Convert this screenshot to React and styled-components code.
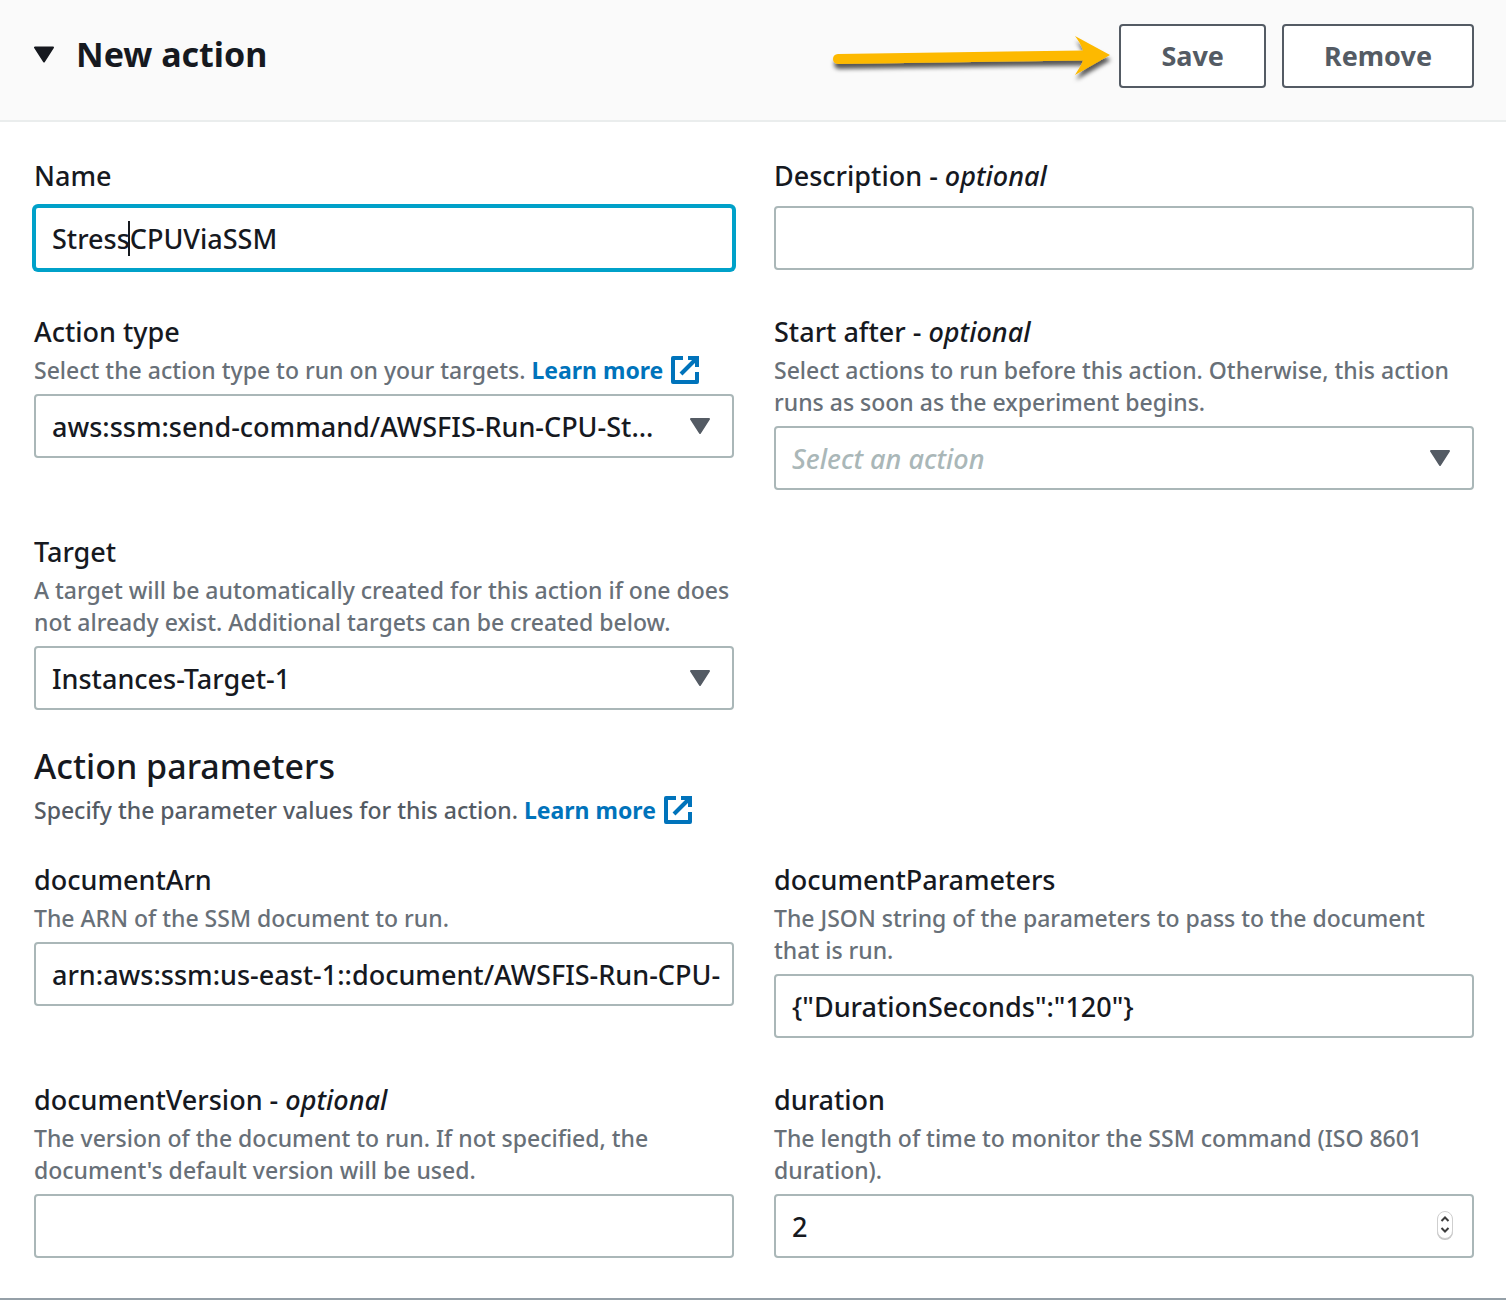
import React from "react";
import styled, { createGlobalStyle, css } from "styled-components";

const colors = {
  text: "#16191f",
  muted: "#687078",
  secondary: "#545b64",
  border: "#aab7b8",
  placeholder: "#aab7b8",
  link: "#0073bb",
  focus: "#00a1c9",
  header: "#fafafa",
  divider: "#eaeded",
};

const GlobalStyle = createGlobalStyle`
  *, *::before, *::after { box-sizing: border-box; }
  body {
    margin: 0;
    background: #ffffff;
    color: ${colors.text};
    font-family: "Noto Sans", "Open Sans", sans-serif;
    font-size: 27px;
    font-weight: 500;
  }
`;

const Panel = styled.section`
  width: 100%;
  border-bottom: 2px solid #95a0a8;
  box-shadow: 0 2px 0 #d9dfdf;
`;

const Header = styled.header`
  display: flex;
  align-items: flex-start;
  justify-content: space-between;
  padding: 24px 32px 32px 34px;
  background: ${colors.header};
  border-bottom: 2px solid ${colors.divider};
`;

const Toggle = styled.button`
  display: flex;
  align-items: center;
  gap: 22px;
  height: 60px;
  padding: 0;
  border: 0;
  background: none;
  color: ${colors.text};
  font: inherit;
  cursor: pointer;
`;

const Title = styled.span`
  font-size: 34px;
  font-weight: 700;
  line-height: 44px;
`;

const Actions = styled.div`
  display: flex;
  align-items: center;
  gap: 16px;
`;

const Pointer = styled.svg`
  display: block;
  flex: none;
  margin-right: -12px;
  overflow: visible;
`;

const Button = styled.button`
  height: 64px;
  padding: 0 40px;
  border: 2px solid ${colors.secondary};
  border-radius: 4px;
  background: #ffffff;
  color: ${colors.secondary};
  font: inherit;
  font-weight: 700;
  line-height: 40px;
  cursor: pointer;
`;

const Body = styled.form`
  padding: 32px 32px 40px 34px;
`;

const Grid = styled.div`
  display: grid;
  grid-template-columns: repeat(2, minmax(0, 1fr));
  column-gap: 40px;
  row-gap: 40px;
  align-items: start;
`;

const Field = styled.div`
  display: flex;
  flex-direction: column;
`;

const Label = styled.label`
  line-height: 44px;
`;

const Hint = styled.p`
  margin: 0;
  color: ${(p) => (p.$strong ? colors.secondary : colors.muted)};
  font-size: 23px;
  line-height: 32px;
`;

const Link = styled.a`
  color: ${colors.link};
  font-weight: 700;
  text-decoration: none;
  white-space: nowrap;

  svg {
    margin-left: 8px;
    vertical-align: -5px;
  }
`;

const Control = styled.div`
  position: relative;
  margin-top: 8px;
`;

const box = css`
  display: block;
  width: 100%;
  height: 64px;
  margin: 0;
  padding: 0 12px 0 16px;
  border: 2px solid ${colors.border};
  border-radius: 4px;
  outline: 0;
  background: #ffffff;
  color: ${colors.text};
  font: inherit;
`;

const Input = styled.input`
  ${box}
  appearance: textfield;

  &::-webkit-inner-spin-button {
    appearance: none;
    margin: 0;
  }

  ${(p) =>
    p.$active &&
    css`
      border-color: ${colors.focus};
      box-shadow: 0 0 0 2px ${colors.focus};
    `}
`;

const Select = styled.select`
  ${box}
  appearance: none;
  padding-right: 60px;
  text-overflow: ellipsis;

  ${(p) =>
    p.$empty &&
    css`
      color: ${colors.placeholder};
      font-style: italic;
    `}
`;

const ControlIcon = styled.svg`
  position: absolute;
  top: 50%;
  right: ${(p) => p.$right}px;
  transform: translateY(-50%);
  pointer-events: none;
`;

const Caret = styled.span`
  position: absolute;
  top: 15px;
  left: 94px;
  width: 2px;
  height: 35px;
  background: ${colors.text};
  pointer-events: none;
`;

const SectionHead = styled.div`
  display: flex;
  flex-direction: column;
  gap: 4px;
  margin: 32px 0;
`;

const SectionTitle = styled.h3`
  margin: 0;
  font-size: 34px;
  font-weight: 500;
  line-height: 48px;
`;

const TRIANGLE = "M1 1.500h18L10 15.500z";

function ExternalIcon() {
  return (
    <svg width="28" height="28" viewBox="0 0 28 28" fill="none" stroke="currentColor" strokeWidth="4" aria-hidden="true">
      <path d="M12 2H2v24h24V16" strokeLinejoin="round" />
      <path d="M17 2h9v9" />
      <path d="M26 2L10 18" />
    </svg>
  );
}

function LearnMore() {
  return (
    <Link href="#">
      Learn more
      <ExternalIcon />
    </Link>
  );
}

function FormField({ id, label, optional, hint, children }) {
  return (
    <Field>
      <Label htmlFor={id}>
        {label}
        {optional && (
          <>
            {" - "}
            <em>optional</em>
          </>
        )}
      </Label>
      {hint && <Hint>{hint}</Hint>}
      <Control>{children}</Control>
    </Field>
  );
}

function Dropdown({ id, value, empty }) {
  return (
    <>
      <Select id={id} $empty={empty}>
        <option>{value}</option>
      </Select>
      <ControlIcon $right={24} width="20" height="17" viewBox="0 0 20 17" aria-hidden="true">
        <path d={TRIANGLE} fill={colors.secondary} stroke={colors.secondary} strokeWidth="2" strokeLinejoin="round" />
      </ControlIcon>
    </>
  );
}

function Stepper() {
  return (
    <ControlIcon $right={20} width="18" height="30" viewBox="0 0 18 30" fill="none" aria-hidden="true">
      <rect x="1" y="2" width="16" height="27" rx="8" fill="#c4c4c4" />
      <rect x="1.5" y="0.5" width="15" height="27" rx="7.5" fill="#fff" stroke="#cfcfcf" />
      <path d="M5.5 10L9 6.500l3.500 3.500M5.500 17L9 20.500l3.500-3.500" stroke="#3c3c3c" strokeWidth="2" />
    </ControlIcon>
  );
}

function ArrowPointer() {
  return (
    <Pointer width="282" height="56" viewBox="0 0 282 56" aria-hidden="true">
      <defs>
        <filter id="arrow-shadow" x="-5%" y="-20%" width="110%" height="160%">
          <feDropShadow dx="1" dy="5" stdDeviation="2" floodColor="#000" floodOpacity="0.65" />
        </filter>
      </defs>
      <path
        d="M5 26L250 22.500C248.500 17 245 12 242 8L277 27L242 47C245 42 248.500 37 250 32.500L5 36Q0 35.500 0 31Q0 26.500 5 26Z"
        fill="#fdb900"
        filter="url(#arrow-shadow)"
      />
    </Pointer>
  );
}

export default function App() {
  return (
    <>
      <GlobalStyle />
      <Panel>
        <Header>
          <Toggle type="button" aria-expanded="true">
            <svg width="20" height="17" viewBox="0 0 20 17" aria-hidden="true">
              <path d={TRIANGLE} fill={colors.text} stroke={colors.text} strokeWidth="2" strokeLinejoin="round" />
            </svg>
            <Title>New action</Title>
          </Toggle>
          <Actions>
            <ArrowPointer />
            <Button type="button">Save</Button>
            <Button type="button">Remove</Button>
          </Actions>
        </Header>
        <Body>
          <Grid>
            <FormField id="name" label="Name">
              <Input id="name" $active defaultValue="StressCPUViaSSM" />
              <Caret />
            </FormField>
            <FormField id="description" label="Description" optional>
              <Input id="description" />
            </FormField>
            <FormField
              id="action-type"
              label="Action type"
              hint={
                <>
                  Select the action type to run on your targets. <LearnMore />
                </>
              }
            >
              <Dropdown id="action-type" value="aws:ssm:send-command/AWSFIS-Run-CPU-St…" />
            </FormField>
            <FormField
              id="start-after"
              label="Start after"
              optional
              hint="Select actions to run before this action. Otherwise, this action runs as soon as the experiment begins."
            >
              <Dropdown id="start-after" value="Select an action" empty />
            </FormField>
            <FormField
              id="target"
              label="Target"
              hint="A target will be automatically created for this action if one does not already exist. Additional targets can be created below."
            >
              <Dropdown id="target" value="Instances-Target-1" />
            </FormField>
          </Grid>
          <SectionHead>
            <SectionTitle>Action parameters</SectionTitle>
            <Hint $strong>
              Specify the parameter values for this action. <LearnMore />
            </Hint>
          </SectionHead>
          <Grid>
            <FormField id="document-arn" label="documentArn" hint="The ARN of the SSM document to run.">
              <Input id="document-arn" defaultValue="arn:aws:ssm:us-east-1::document/AWSFIS-Run-CPU-" />
            </FormField>
            <FormField
              id="document-parameters"
              label="documentParameters"
              hint="The JSON string of the parameters to pass to the document that is run."
            >
              <Input id="document-parameters" defaultValue={'{"DurationSeconds":"120"}'} />
            </FormField>
            <FormField
              id="document-version"
              label="documentVersion"
              optional
              hint="The version of the document to run. If not specified, the document's default version will be used."
            >
              <Input id="document-version" />
            </FormField>
            <FormField
              id="duration"
              label="duration"
              hint="The length of time to monitor the SSM command (ISO 8601 duration)."
            >
              <Input id="duration" type="number" defaultValue="2" />
              <Stepper />
            </FormField>
          </Grid>
        </Body>
      </Panel>
    </>
  );
}
